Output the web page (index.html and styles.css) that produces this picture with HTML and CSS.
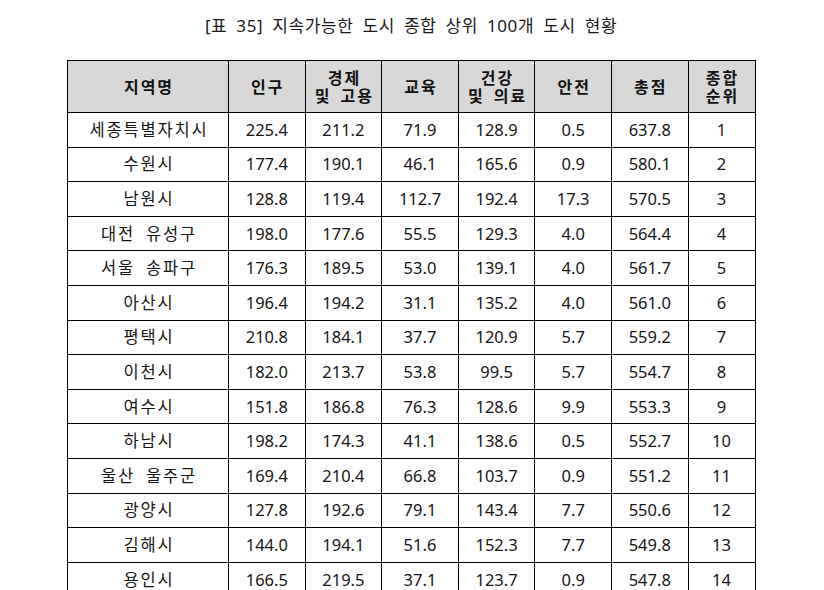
FILE: index.html
```html
<!DOCTYPE html>
<html lang="ko">
<head>
<meta charset="utf-8">
<link rel="stylesheet" href="styles.css">
</head>
<body>
<div class="page">
  <h1 class="title">[표 35] 지속가능한 도시 종합 상위 100개 도시 현황</h1>
  <table class="grid">
    <colgroup>
      <col class="c-name"><col class="c-num"><col class="c-num"><col class="c-num"><col class="c-num"><col class="c-num"><col class="c-num"><col class="c-rank">
    </colgroup>
    <thead>
      <tr>
        <th>지역명</th><th>인구</th><th>경제<br>및 고용</th><th>교육</th><th>건강<br>및 의료</th><th>안전</th><th>총점</th><th>종합<br>순위</th>
      </tr>
    </thead>
    <tbody>
      <tr><td class="name">세종특별자치시</td><td>225.4</td><td>211.2</td><td>71.9</td><td>128.9</td><td>0.5</td><td>637.8</td><td>1</td></tr>
      <tr><td class="name">수원시</td><td>177.4</td><td>190.1</td><td>46.1</td><td>165.6</td><td>0.9</td><td>580.1</td><td>2</td></tr>
      <tr><td class="name">남원시</td><td>128.8</td><td>119.4</td><td>112.7</td><td>192.4</td><td>17.3</td><td>570.5</td><td>3</td></tr>
      <tr><td class="name">대전 유성구</td><td>198.0</td><td>177.6</td><td>55.5</td><td>129.3</td><td>4.0</td><td>564.4</td><td>4</td></tr>
      <tr><td class="name">서울 송파구</td><td>176.3</td><td>189.5</td><td>53.0</td><td>139.1</td><td>4.0</td><td>561.7</td><td>5</td></tr>
      <tr><td class="name">아산시</td><td>196.4</td><td>194.2</td><td>31.1</td><td>135.2</td><td>4.0</td><td>561.0</td><td>6</td></tr>
      <tr><td class="name">평택시</td><td>210.8</td><td>184.1</td><td>37.7</td><td>120.9</td><td>5.7</td><td>559.2</td><td>7</td></tr>
      <tr><td class="name">이천시</td><td>182.0</td><td>213.7</td><td>53.8</td><td>99.5</td><td>5.7</td><td>554.7</td><td>8</td></tr>
      <tr><td class="name">여수시</td><td>151.8</td><td>186.8</td><td>76.3</td><td>128.6</td><td>9.9</td><td>553.3</td><td>9</td></tr>
      <tr><td class="name">하남시</td><td>198.2</td><td>174.3</td><td>41.1</td><td>138.6</td><td>0.5</td><td>552.7</td><td>10</td></tr>
      <tr><td class="name">울산 울주군</td><td>169.4</td><td>210.4</td><td>66.8</td><td>103.7</td><td>0.9</td><td>551.2</td><td>11</td></tr>
      <tr><td class="name">광양시</td><td>127.8</td><td>192.6</td><td>79.1</td><td>143.4</td><td>7.7</td><td>550.6</td><td>12</td></tr>
      <tr><td class="name">김해시</td><td>144.0</td><td>194.1</td><td>51.6</td><td>152.3</td><td>7.7</td><td>549.8</td><td>13</td></tr>
      <tr><td class="name">용인시</td><td>166.5</td><td>219.5</td><td>37.1</td><td>123.7</td><td>0.9</td><td>547.8</td><td>14</td></tr>
    </tbody>
  </table>
</div>
</body>
</html>
```
FILE: styles.css
```css
html, body {
  margin: 0;
  padding: 0;
  background: #fff;
}
body {
  font-family: "Noto Sans", "Noto Sans CJK KR", sans-serif;
  color: #111;
}
.page {
  padding-top: 13px;
  padding-left: 67px;
  width: 688px;
}
.title {
  margin: 0 0 21px 0;
  font-size: 17px;
  font-weight: 400;
  line-height: 26px;
  text-align: center;
  letter-spacing: 0.6px;
  word-spacing: 4px;
  color: #1a1a1a;
}
.grid {
  border-collapse: collapse;
  table-layout: fixed;
  width: 688px;
}
.c-name { width: 161px; }
.c-num { width: 76.6px; }
.c-rank { width: 67px; }
.grid th, .grid td {
  border: 1px solid #000;
  padding: 0;
  text-align: center;
  vertical-align: middle;
}
.grid th {
  background: #d8d8d8;
  font-weight: 700;
  font-size: 16px;
  line-height: 18px;
  letter-spacing: 2px;
  word-spacing: 3px;
  height: 51px;
  padding-left: 2px;
}
.grid td {
  font-size: 16.5px;
  font-weight: 400;
  height: 33.6px;
  line-height: 20px;
  color: #161616;
}
.grid td.name {
  letter-spacing: 1.8px;
  word-spacing: 5px;
  padding-left: 2px;
}
```
